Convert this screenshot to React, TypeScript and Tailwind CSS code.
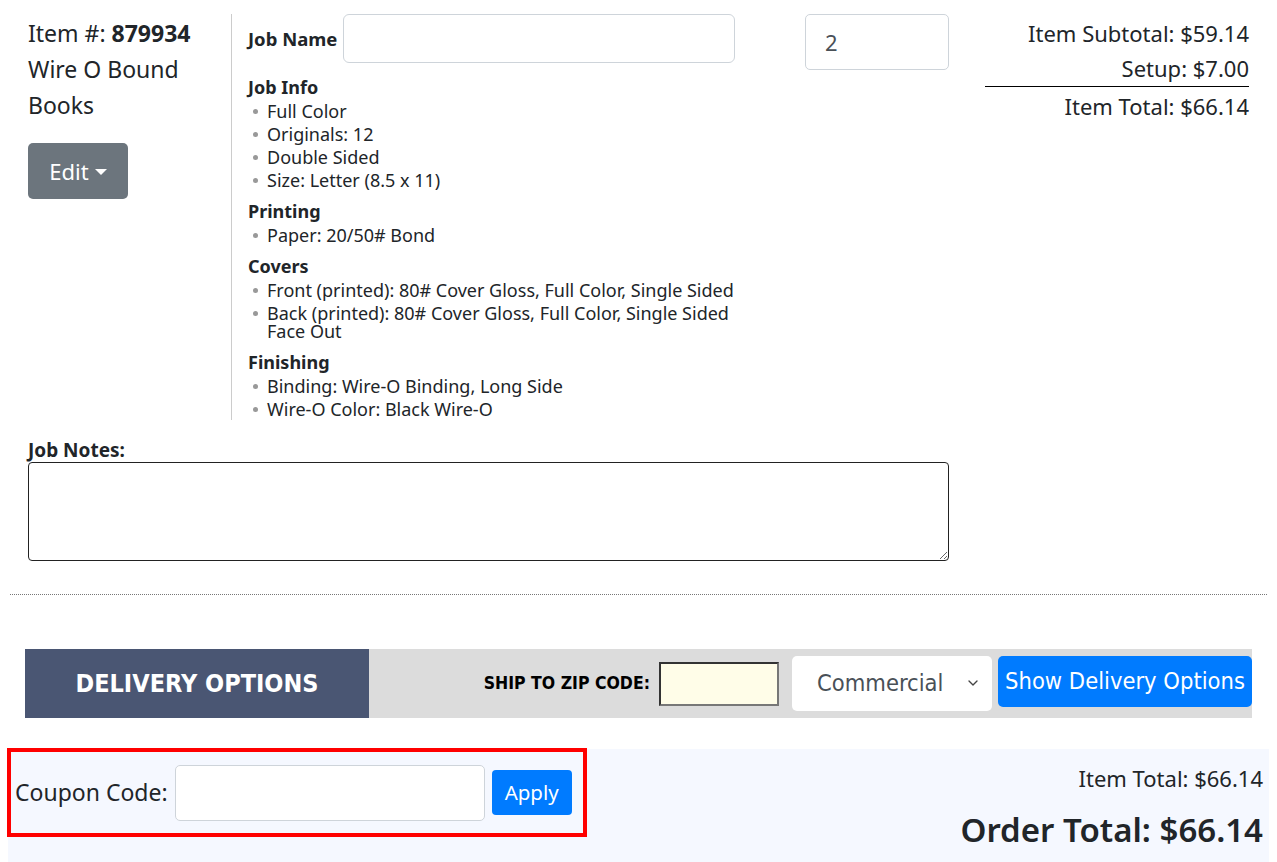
import { ChevronDown } from 'lucide-react'

// Line items shown in the job spec column
const jobSpecs: { title: string; items: string[][] }[] = [
  { title: 'Job Info', items: [['Full Color'], ['Originals: 12'], ['Double Sided'], ['Size: Letter (8.5 x 11)']] },
  { title: 'Printing', items: [['Paper: 20/50# Bond']] },
  {
    title: 'Covers',
    items: [
      ['Front (printed): 80# Cover Gloss, Full Color, Single Sided'],
      ['Back (printed): 80# Cover Gloss, Full Color, Single Sided', 'Face Out'],
    ],
  },
  { title: 'Finishing', items: [['Binding: Wire-O Binding, Long Side'], ['Wire-O Color: Black Wire-O']] },
]

function SpecGroup({ title, items, first }: { title: string; items: string[][]; first?: boolean }) {
  return (
    <div className={first ? 'mt-[12px]' : 'mt-[8px]'}>
      <div className="text-[18px] font-bold leading-[24px]">{title}</div>
      <ul>
        {items.map((lines, i) => (
          <li key={i} className="flex py-[2.5px] text-[18px] leading-[18px]">
            <span className="ml-[5px] mt-[7px] h-[5px] w-[5px] shrink-0 rounded-full bg-[#999]" />
            <span className="ml-[9px]">
              {lines.map((l, j) => (
                <span key={j} className="block">
                  {l}
                </span>
              ))}
            </span>
          </li>
        ))}
      </ul>
    </div>
  )
}

export default function App() {
  return (
    <div className="relative h-[862px] w-[1277px] overflow-hidden bg-white font-['Noto_Sans',sans-serif] text-[#212529]">
      {/* cart item row */}
      <div className="flex pl-[28px] pt-[14px]">
        <div className="w-[203px] pt-[1px] text-[23px] leading-[36px]">
          <div>
            Item #: <span className="font-bold">879934</span>
          </div>
          <div>
            Wire O Bound
            <br />
            Books
          </div>
          <button className="mt-[20px] flex h-[56px] w-[100px] items-center justify-center gap-[6px] rounded-[5px] bg-[#6c757d] text-[22px] text-white">
            Edit
            <span className="mt-[2px] h-0 w-0 border-x-[6px] border-t-[6px] border-x-transparent border-t-white" />
          </button>
        </div>

        <div className="w-[559px] border-l border-[#ccc] pl-[16px]">
          <div className="flex items-center">
            <span className="text-[18.5px] font-bold">Job Name</span>
            <input className="ml-[6px] h-[49px] w-[392px] rounded-[6px] border border-[#ced4da] bg-white px-3 outline-none" />
          </div>
          {jobSpecs.map((g, i) => (
            <SpecGroup key={g.title} title={g.title} items={g.items} first={i === 0} />
          ))}
        </div>

        <div className="ml-[15px] w-[144px]">
          <input
            defaultValue="2"
            className="h-[56px] w-[144px] rounded-[5px] border border-[#ced4da] pl-[19px] text-[22px] text-[#495057] outline-none"
          />
        </div>

        <div className="ml-[36px] w-[264px] pt-[1px] text-right text-[22px]">
          <div className="leading-[36px]">Item Subtotal: $59.14</div>
          <div className="border-b border-black leading-[35px]">Setup: $7.00</div>
          <div className="leading-[38px]">Item Total: $66.14</div>
        </div>
      </div>

      {/* notes */}
      <div className="mt-[18px] pl-[28px]">
        <div className="text-[19px] font-bold leading-[24px]">Job Notes:</div>
        <textarea className="block h-[99px] w-[921px] rounded-[4px] border border-[#222] outline-none" />
      </div>

      <div className="mx-[10px] mt-[33px] border-t border-dotted border-[#777]" />

      {/* delivery options bar */}
      <div className="mx-[25px] mt-[54px] flex h-[69px] bg-[#dcdcdc] font-['DejaVu_Sans_Condensed',sans-serif]">
        <div className="flex w-[344px] items-center justify-center bg-[#4a5673] text-[25px] font-bold text-white">
          DELIVERY OPTIONS
        </div>
        <div className="flex flex-1 items-center justify-end">
          <span className="text-[17.5px] font-bold text-black">SHIP TO ZIP CODE:</span>
          <input className="ml-[9px] h-[44px] w-[120px] border-2 border-b-[#777] border-l-[#333] border-r-[#777] border-t-[#333] bg-[#fffde8] outline-none" />
          <div className="relative ml-[13px] h-[55px] w-[200px]">
            <select className="h-full w-full appearance-none rounded-[5px] bg-white pl-[25px] text-[23.5px] text-[#495057] outline-none">
              <option>Commercial</option>
            </select>
            <ChevronDown className="pointer-events-none absolute right-[11px] top-[19px] h-[16px] w-[16px] text-[#444]" strokeWidth={2} />
          </div>
          <button className="ml-[6px] mt-[7px] h-[51px] w-[254px] self-start rounded-[5px] bg-[#007bff] text-[23.5px] text-white">
            Show Delivery Options
          </button>
        </div>
      </div>

      {/* coupon + totals */}
      <div className="mx-[8px] mt-[31px] flex h-[120px] justify-between bg-[#f5f8ff]">
        <div className="-ml-[1px] -mt-[1px] flex h-[89px] w-[580px] items-center border-4 border-[#ff0000] pl-[4px]">
          <span className="text-[23px]">Coupon Code:</span>
          <input className="ml-[7px] h-[56px] w-[310px] rounded-[5px] border border-[#ced4da] bg-white outline-none" />
          <button className="ml-[7px] h-[45px] w-[80px] rounded-[4px] bg-[#007bff] text-[20.5px] text-white">Apply</button>
        </div>
        <div className="pr-[6px] pt-[14px] text-right">
          <div className="text-[22px] leading-[30px]">Item Total: $66.14</div>
          <div className="mt-[15px] text-[33px] font-semibold leading-[44px]">Order Total: $66.14</div>
        </div>
      </div>
    </div>
  )
}
